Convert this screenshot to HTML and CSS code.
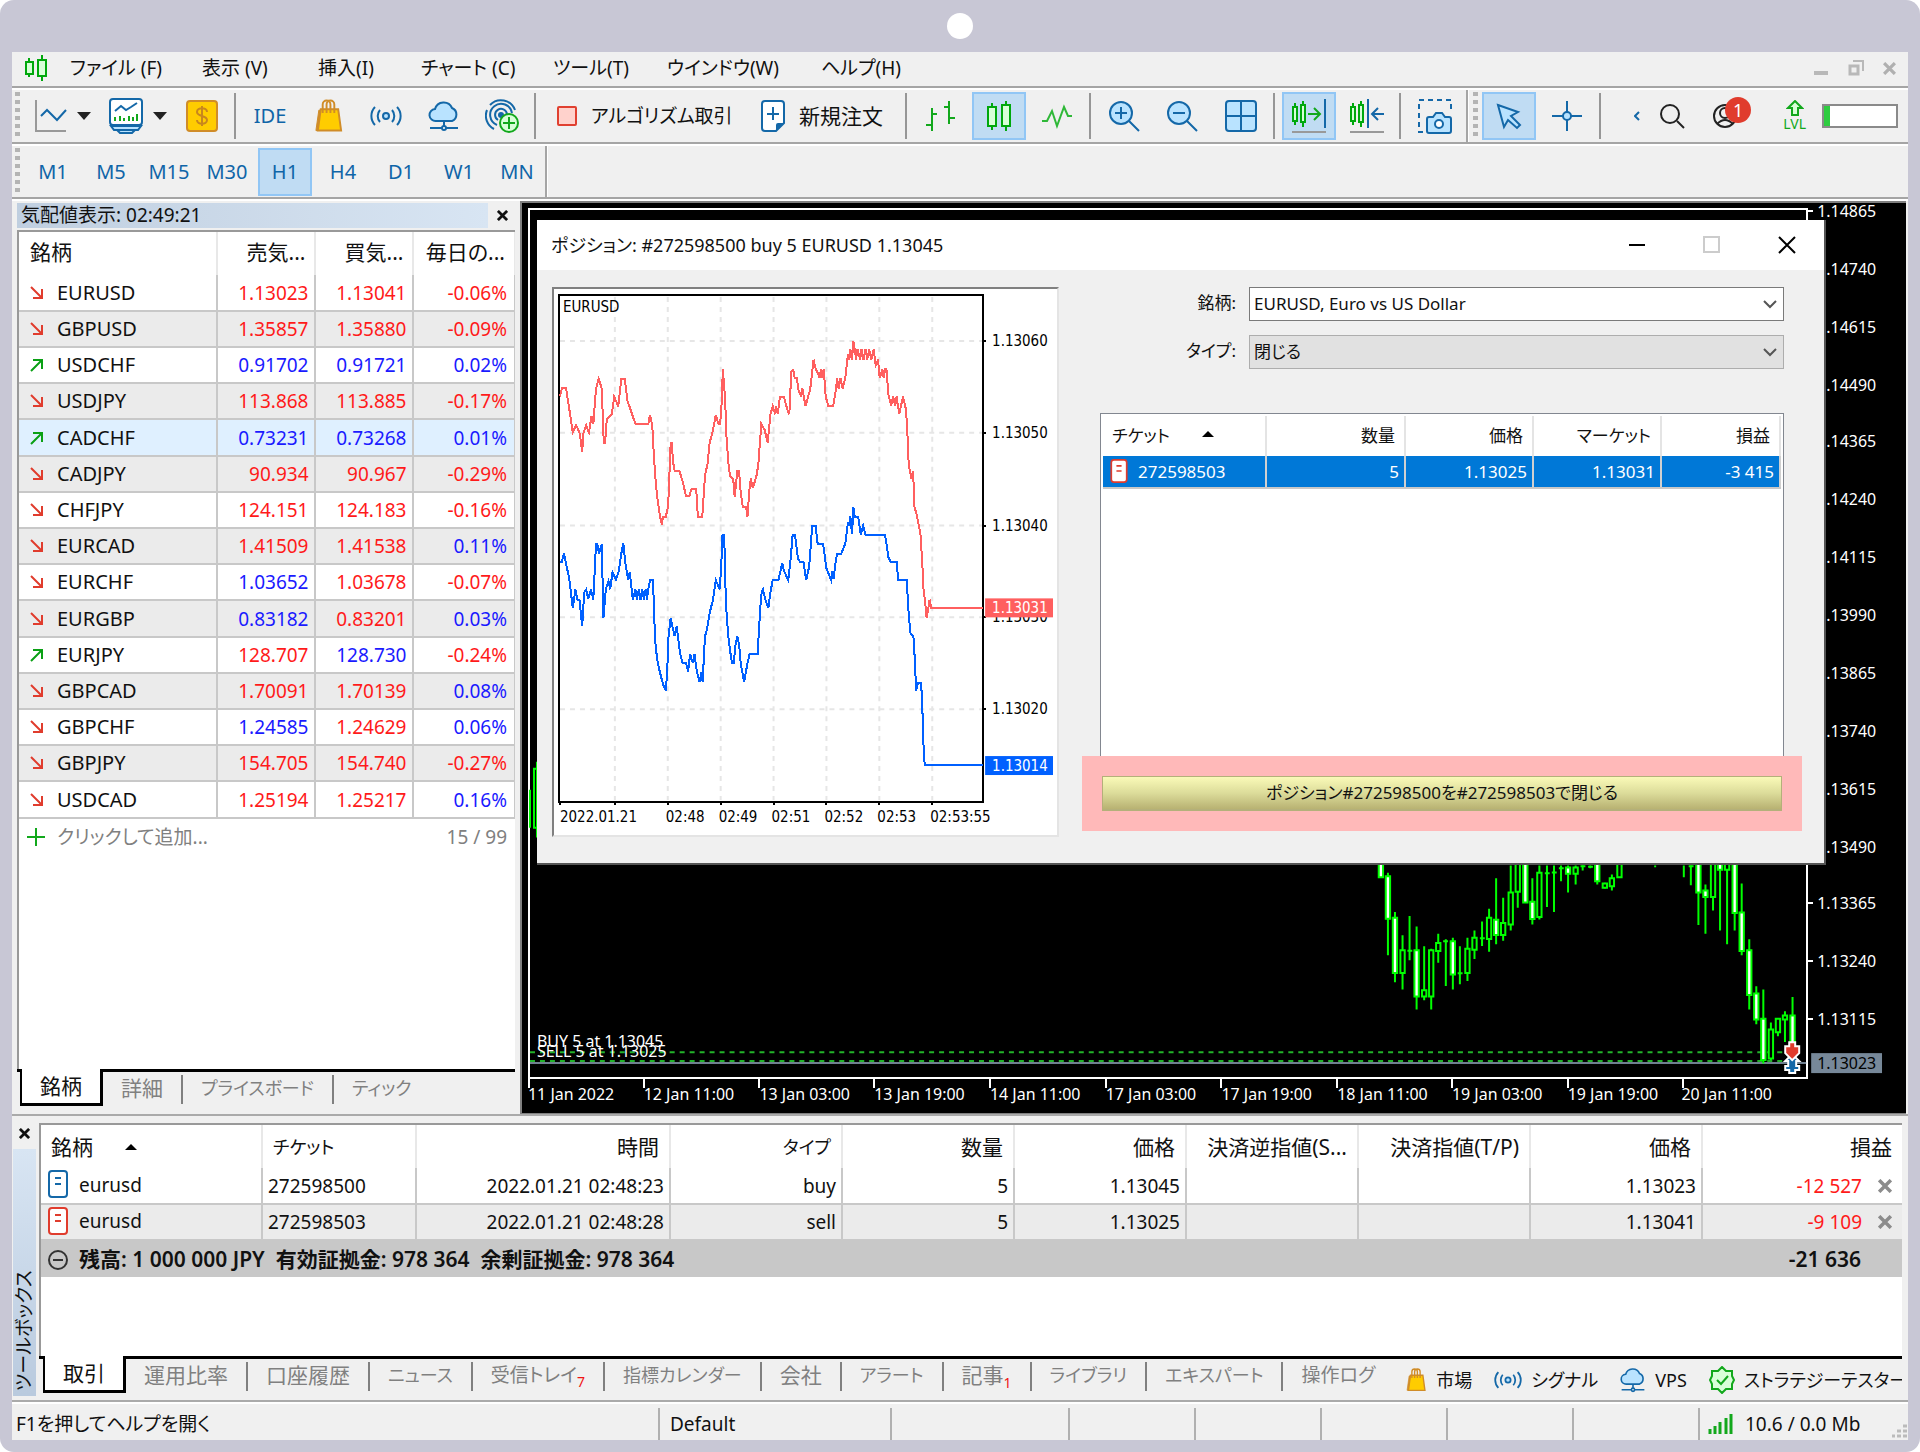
FILE: index.html
```
<!DOCTYPE html>
<html lang="ja">
<head>
<meta charset="utf-8">
<title>EURUSD,H1</title>
<link rel="stylesheet" href="styles.css">
</head>
<body>
<svg class="defs" aria-hidden="true">
  <symbol id="i-bag" viewBox="0 0 32 34">
    <path d="M10 10V5a4 4 0 0 1 8 0v5M14 10V5a4 4 0 0 1 8 0v5" fill="none" stroke="#d08c28" stroke-width="2"/>
    <path d="M6 11h4l-3 21H3z" fill="#d08c28" stroke="#d08c28"/>
    <path d="M8 10h18l3 22H5z" fill="#fc0" stroke="#d08c28" stroke-width="2"/>
    <path d="M10 10v4M14 10v4M18 10v4M22 10v4" stroke="#d08c28" stroke-width="2"/>
  </symbol>
  <symbol id="i-signal" viewBox="0 0 32 32">
    <g fill="none" stroke="#1468a8" stroke-width="2"><circle cx="16" cy="16" r="3" fill="#b9e3ff"/><path d="M10 10a9 9 0 0 0 0 12M22 10a9 9 0 0 1 0 12M5 7a13 13 0 0 0 0 18M27 7a13 13 0 0 1 0 18"/></g>
  </symbol>
  <symbol id="i-cloud" viewBox="0 0 32 32">
    <path d="M8 21a6 6 0 0 1-1-12 9 9 0 0 1 17-1 7 7 0 0 1 0 13z" fill="#b9e3ff" stroke="#1468a8" stroke-width="2"/>
    <path d="M16 21v6M2 28h12M18 28h12" fill="none" stroke="#1468a8" stroke-width="2"/><circle cx="16" cy="28" r="2" fill="#fff" stroke="#1468a8" stroke-width="2"/>
  </symbol>
  <symbol id="i-doc" viewBox="0 0 20 28">
    <rect x="1" y="1" width="18" height="26" rx="3" fill="#fff" stroke="currentColor" stroke-width="2"/>
    <path d="M7 8h6M7 14h6" stroke="currentColor" stroke-width="2"/>
  </symbol>
  <symbol id="i-down" viewBox="0 0 14 14"><path d="M1 1l11 11M12 3v9H3" fill="none" stroke="#e03c2d" stroke-width="2"/></symbol>
  <symbol id="i-up" viewBox="0 0 14 14"><path d="M1 13L12 2M3 2h9v9" fill="none" stroke="#0aa014" stroke-width="2"/></symbol>
  <symbol id="i-arrow" viewBox="0 0 14 8"><path d="M0 0h14L7 8z" fill="#222"/></symbol>
  <symbol id="i-x" viewBox="0 0 12 12"><path d="M1 1l10 10M11 1L1 11" stroke="currentColor" stroke-width="3"/></symbol>
  <symbol id="i-sort" viewBox="0 0 12 6"><path d="M0 6L6 0l6 6z" fill="#000"/></symbol>
</svg>

<div class="frame">
  <div class="bezel"><span class="camera"></span></div>
  <div class="app">

    <header class="menubar">
      <svg class="logo" viewBox="0 0 24 26"><g fill="#d8ffd8" stroke="#00a80c" stroke-width="2"><path d="M5 3v19M18 0v26"/><rect x="2" y="7" width="7" height="12"/><rect x="14" y="5" width="8" height="16"/></g></svg>
      <nav class="menus">
        <a href="#">ファイル (F)</a><a href="#">表示 (V)</a><a href="#">挿入(I)</a><a href="#">チャート (C)</a><a href="#">ツール(T)</a><a href="#">ウインドウ(W)</a><a href="#">ヘルプ(H)</a>
      </nav>
      <div class="mdi">
        <button aria-label="最小化"><svg width="16" height="16"><rect x="1" y="11" width="14" height="4" fill="#b8b8b8"/></svg></button>
        <button aria-label="元に戻す"><svg width="16" height="16"><path d="M5 1h10v10" fill="none" stroke="#b8b8b8" stroke-width="2"/><rect x="2" y="6" width="8" height="8" fill="none" stroke="#b8b8b8" stroke-width="3"/></svg></button>
        <button aria-label="閉じる" class="dim"><svg width="13" height="13"><use href="#i-x"/></svg></button>
      </div>
    </header>

    <div class="toolbar">
      <span class="grip"></span>
      <button class="split" aria-label="チャート"><svg width="32" height="32"><path d="M1 0v31h30" fill="none" stroke="#999" stroke-width="2"/><path d="M6 16l6-6 10 10 9-10" fill="none" stroke="#1468a8" stroke-width="2"/></svg><svg width="14" height="8"><use href="#i-arrow"/></svg></button>
      <button class="split" aria-label="プロファイル"><svg width="34" height="36"><rect x="1" y="1" width="32" height="26" rx="3" fill="#fff" stroke="#1468a8" stroke-width="2"/><path d="M2 28h30l-3 4H5zM8 32h18l-3 3H11z" fill="#b9e3ff" stroke="#1468a8" stroke-width="2"/><path d="M6 13l6-5 5 4 5-3 6-4" fill="none" stroke="#1468a8" stroke-width="2"/><path d="M6 19v4M11 18v5M15 20v3M20 18v5M24 19v4M28 16v7" stroke="#12a81c" stroke-width="2"/></svg><svg width="14" height="8"><use href="#i-arrow"/></svg></button>
      <button class="tool" aria-label="入出金"><svg width="32" height="32"><rect x="1" y="1" width="30" height="30" rx="3" fill="#fc0" stroke="#d08c28" stroke-width="2"/><path d="M21 12c0-5-10-5-10 0 0 5 10 3 10 8 0 5-10 5-10 0M16 6v20" fill="none" stroke="#c8861e" stroke-width="2"/></svg></button>
      <span class="sep"></span>
      <button class="tool ide">IDE</button>
      <button class="tool" aria-label="市場"><svg width="31" height="34"><use href="#i-bag"/></svg></button>
      <button class="tool" aria-label="シグナル"><svg width="32" height="32"><use href="#i-signal"/></svg></button>
      <button class="tool" aria-label="VPS"><svg width="32" height="32"><use href="#i-cloud"/></svg></button>
      <button class="tool" aria-label="コピー"><svg width="34" height="34" viewBox="0 0 34 34"><g fill="none" stroke="#1468a8" stroke-width="2"><path d="M9 30A15 15 0 0 1 2 11M5 6A15 15 0 0 1 30 11"/><path d="M12 26A11 11 0 1 1 27 14"/><path d="M13 21A6 6 0 1 1 22 15"/></g><circle cx="16" cy="16" r="3" fill="#1468a8"/><circle cx="24" cy="24" r="9" fill="#d8ffd8" stroke="#12a81c" stroke-width="2"/><path d="M24 18v12M18 24h12" stroke="#12a81c" stroke-width="2"/></svg></button>
      <span class="sep"></span>
      <button class="labelled algo"><svg width="20" height="20"><rect x="1" y="1" width="18" height="18" rx="1" fill="#ffd2cc" stroke="#e04030" stroke-width="2"/></svg>アルゴリズム取引</button>
      <button class="labelled order"><svg width="24" height="32"><path d="M4 1h16a3 3 0 0 1 3 3v19l-8 8H4a3 3 0 0 1-3-3V4a3 3 0 0 1 3-3z" fill="#fff" stroke="#1468a8" stroke-width="2"/><path d="M15 31v-6q0-2 2-2h6z" fill="#1468a8"/><path d="M12 7v13M6 14h12" stroke="#1468a8" stroke-width="2"/></svg>新規注文</button>
      <span class="sep"></span>
      <button class="tool" aria-label="バーチャート"><svg width="32" height="32"><path d="M7 8v23M7 14h5M1 25h6M24 1v23M19 7h5M24 18h6" fill="none" stroke="#12a81c" stroke-width="2"/></svg></button>
      <button class="tool on" aria-label="ローソク足"><svg width="32" height="32"><g fill="#d8ffd8" stroke="#00a80c" stroke-width="2"><path d="M9 3v27M23 1v30"/><rect x="5" y="7" width="8" height="19"/><rect x="19" y="5" width="8" height="21"/></g></svg></button>
      <button class="tool" aria-label="ラインチャート"><svg width="32" height="32"><path d="M1 21h5l5-10 5 15 7-19 4 9h4" fill="none" stroke="#2fb838" stroke-width="2"/></svg></button>
      <span class="sep"></span>
      <button class="tool" aria-label="ズームイン"><svg width="32" height="32"><circle cx="12" cy="13" r="11" fill="#b9e3ff" stroke="#1468a8" stroke-width="2"/><path d="M12 7v12M6 13h12M20 21l10 10" stroke="#1468a8" stroke-width="2"/></svg></button>
      <button class="tool" aria-label="ズームアウト"><svg width="32" height="32"><circle cx="12" cy="13" r="11" fill="#b9e3ff" stroke="#1468a8" stroke-width="2"/><path d="M6 13h12M20 21l10 10" stroke="#1468a8" stroke-width="2"/></svg></button>
      <button class="tool" aria-label="整列"><svg width="32" height="32"><rect x="1" y="1" width="30" height="30" rx="3" fill="#b9e3ff" stroke="#1468a8" stroke-width="2"/><path d="M16 1v30M1 16h30" stroke="#1468a8" stroke-width="2"/></svg></button>
      <span class="sep"></span>
      <button class="tool on" aria-label="自動スクロール"><svg width="36" height="36"><g fill="#d8ffd8" stroke="#00a80c" stroke-width="2"><path d="M4 5v22M12 3v26"/><rect x="2" y="9" width="4" height="14"/><rect x="10" y="7" width="4" height="17"/></g><path d="M17 16h12M23 10l6 6-6 6" fill="none" stroke="#12a81c" stroke-width="2"/><path d="M34 1v29" stroke="#1468a8" stroke-width="2"/><path d="M1 34h34" stroke="#999" stroke-width="2"/></svg></button>
      <button class="tool" aria-label="チャートシフト"><svg width="36" height="36"><g fill="#d8ffd8" stroke="#00a80c" stroke-width="2"><path d="M4 5v22M12 3v26"/><rect x="2" y="9" width="4" height="14"/><rect x="10" y="7" width="4" height="17"/></g><path d="M35 16H24M29 10l-6 6 6 6" fill="none" stroke="#1468a8" stroke-width="2"/><path d="M19 1v29" stroke="#1468a8" stroke-width="2"/><path d="M1 34h34" stroke="#999" stroke-width="2"/></svg></button>
      <span class="sep"></span>
      <button class="tool" aria-label="スクリーンショット"><svg width="36" height="36"><path d="M6 34H2V2h32v12" fill="none" stroke="#1468a8" stroke-width="2" stroke-dasharray="5 4"/><path d="M12 19h4l3-4h6l3 4h4q2 0 2 2v12q0 2-2 2H12q-2 0-2-2V21q0-2 2-2z" fill="#b9e3ff" stroke="#1468a8" stroke-width="2"/><circle cx="22" cy="26" r="4" fill="#fff" stroke="#1468a8" stroke-width="2"/></svg></button>
      <span class="edge"></span>
      <span class="grip"></span>
      <button class="tool on" aria-label="カーソル"><svg width="28" height="28"><path d="M3 3l20 7-7 4 9 9-3 3-9-8-4 7z" fill="#b9e3ff" stroke="#1468a8" stroke-width="2"/></svg></button>
      <button class="tool" aria-label="十字カーソル"><svg width="32" height="32"><path d="M16 1v11M16 20v11M1 16h11M20 16h11" stroke="#1468a8" stroke-width="2"/><circle cx="16" cy="16" r="4" fill="#b9e3ff" stroke="#1468a8" stroke-width="2"/></svg></button>
      <span class="sep"></span>
      <div class="tray">
        <svg width="6" height="10"><path d="M5 1L1 5l4 4" fill="none" stroke="#1468a8" stroke-width="2"/></svg>
        <button aria-label="検索"><svg width="26" height="26"><circle cx="11" cy="11" r="9" fill="none" stroke="#222" stroke-width="2"/><path d="M18 18l7 7" stroke="#222" stroke-width="2"/></svg></button>
        <button class="account" aria-label="通知 1件"><svg width="26" height="26"><circle cx="12" cy="13" r="11" fill="none" stroke="#222" stroke-width="2"/><circle cx="12" cy="10" r="5" fill="none" stroke="#222" stroke-width="2"/><path d="M4 21q8-8 16 0" fill="none" stroke="#222" stroke-width="2"/></svg><span class="badge">1</span></button>
        <span class="lvl"><svg width="18" height="16"><path d="M9 1l7 7H12v7H6V8H2z" fill="#d8ffd8" stroke="#12a81c" stroke-width="2"/></svg>LVL</span>
        <span class="meter"><span class="fill"></span></span>
      </div>
    </div>

    <div class="toolbar frames">
      <span class="grip"></span>
      <button class="tool">M1</button><button class="tool">M5</button><button class="tool">M15</button><button class="tool">M30</button><button class="tool on">H1</button><button class="tool">H4</button><button class="tool">D1</button><button class="tool">W1</button><button class="tool">MN</button>
      <span class="edge"></span>
    </div>

    <main class="workspace">
      <section class="market">
        <div class="caption"><h2>気配値表示: 02:49:21</h2><button aria-label="閉じる"><svg width="11" height="11"><use href="#i-x"/></svg></button></div>
        <div class="sheet">
          <table class="quotes">
            <colgroup><col><col class="c-price"><col class="c-price"><col class="c-day"></colgroup>
            <thead><tr><th>銘柄</th><th>売気...</th><th>買気...</th><th>毎日の...</th></tr></thead>
            <tbody>
              <tr><td><svg><use href="#i-down"/></svg>EURUSD</td><td class="r">1.13023</td><td class="r">1.13041</td><td class="r">-0.06%</td></tr>
              <tr><td><svg><use href="#i-down"/></svg>GBPUSD</td><td class="r">1.35857</td><td class="r">1.35880</td><td class="r">-0.09%</td></tr>
              <tr><td><svg><use href="#i-up"/></svg>USDCHF</td><td class="b">0.91702</td><td class="b">0.91721</td><td class="b">0.02%</td></tr>
              <tr><td><svg><use href="#i-down"/></svg>USDJPY</td><td class="r">113.868</td><td class="r">113.885</td><td class="r">-0.17%</td></tr>
              <tr class="hot"><td><svg><use href="#i-up"/></svg>CADCHF</td><td class="b">0.73231</td><td class="b">0.73268</td><td class="b">0.01%</td></tr>
              <tr><td><svg><use href="#i-down"/></svg>CADJPY</td><td class="r">90.934</td><td class="r">90.967</td><td class="r">-0.29%</td></tr>
              <tr><td><svg><use href="#i-down"/></svg>CHFJPY</td><td class="r">124.151</td><td class="r">124.183</td><td class="r">-0.16%</td></tr>
              <tr><td><svg><use href="#i-down"/></svg>EURCAD</td><td class="r">1.41509</td><td class="r">1.41538</td><td class="b">0.11%</td></tr>
              <tr><td><svg><use href="#i-down"/></svg>EURCHF</td><td class="b">1.03652</td><td class="r">1.03678</td><td class="r">-0.07%</td></tr>
              <tr><td><svg><use href="#i-down"/></svg>EURGBP</td><td class="b">0.83182</td><td class="r">0.83201</td><td class="b">0.03%</td></tr>
              <tr><td><svg><use href="#i-up"/></svg>EURJPY</td><td class="r">128.707</td><td class="b">128.730</td><td class="r">-0.24%</td></tr>
              <tr><td><svg><use href="#i-down"/></svg>GBPCAD</td><td class="r">1.70091</td><td class="r">1.70139</td><td class="b">0.08%</td></tr>
              <tr><td><svg><use href="#i-down"/></svg>GBPCHF</td><td class="b">1.24585</td><td class="r">1.24629</td><td class="b">0.06%</td></tr>
              <tr><td><svg><use href="#i-down"/></svg>GBPJPY</td><td class="r">154.705</td><td class="r">154.740</td><td class="r">-0.27%</td></tr>
              <tr><td><svg><use href="#i-down"/></svg>USDCAD</td><td class="r">1.25194</td><td class="r">1.25217</td><td class="b">0.16%</td></tr>
            </tbody>
          </table>
          <div class="add"><svg width="18" height="18"><path d="M9 0v18M0 9h18" stroke="#12a81c" stroke-width="2"/></svg><span>クリックして追加...</span><span class="count">15 / 99</span></div>
        </div>
        <div class="tabs small"><button class="tab active">銘柄</button><button class="tab">詳細</button><button class="tab kana">プライスボード</button><button class="tab kana">ティック</button></div>
      </section>

      <section class="chart">
        <svg class="plot" viewBox="0 0 1384 912" preserveAspectRatio="xMinYMin meet">
          <g fill="none" stroke="#fff" stroke-width="2" shape-rendering="crispEdges">
            <path d="M7 877V6h1281v871z"/>
            <path d="M1288 8h6M1288 702h6M1288 760h6M1288 818h6M7 877v10M122 877v10M238 877v10M353 877v10M469 877v10M585 877v10M701 877v10M817 877v10M932 877v10M1048 877v10M1164 877v10"/>
          </g>
          <path d="M8 862h1279" stroke="#708090" stroke-width="2"/>
          <path d="M8 851h1272M8 860h1272" stroke="#22b32a" stroke-width="2" stroke-dasharray="5 5"/>
          <path d="M8 588v38M15 560v76M15 567h-3v59h3" fill="none" stroke="#0f0" stroke-width="2"/>
          <g transform="translate(548 529) scale(.5421 .3333)">
            <path class="wick" d="M577 405V440M590 427V675M603 545V756M617 615V778M630 557V690M643 588V838M657 648V810M670 655V838M683 610V697M697 627V767M710 622V778M723 648V762M737 622V752M750 600V686M764 573V647M777 535V664M790 443V642M803 502V631M817 405V600M830 405V532M844 405V516M857 443V582M870 405V567M884 405V530M897 405V545M910 405V452M923 405V486M937 405V462M950 405V420M964 405V413M977 405V462M991 457V474M1004 432V480M1018 405V440M1084 405V410M1137 405V440M1150 405V464M1164 405V584M1177 462V610M1191 405V540M1204 405V600M1217 405V642M1231 405V600M1244 459V675M1258 627V838M1271 768V882M1284 778V1000M1298 877V990M1311 866V918M1324 843V936M1338 800V950"/>
            <path class="wick" d="M626 661h9M692 633h9M719 729h9M760 624h9M880 428h9M893 426h9M906 413h9M946 407h9M960 409h9M1146 407h9"/>
            <path class="bear" d="M573 395h8v45h-8zM586 437h8v128h-8zM599 562h8v166h-8zM639 660h8v139h-8zM706 633h8v100h-8zM786 568h8v46h-8zM840 395h8v121h-8zM853 514h8v52h-8zM919 411h8v19h-8zM973 395h8v57h-8zM1160 395h8v91h-8zM1173 480h8v20h-8zM1200 395h8v23h-8zM1227 395h8v153h-8zM1240 546h8v116h-8zM1254 660h8v134h-8zM1267 790h8v78h-8zM1280 866h8v124h-8zM1334 856h8v94h-8z"/>
            <path class="bull" d="M613 660h8v68h-8zM653 780h8v19h-8zM666 660h8v139h-8zM679 638h8v24h-8zM733 655h8v73h-8zM746 622h8v36h-8zM773 562h8v64h-8zM799 578h8v36h-8zM813 486h8v96h-8zM826 395h8v89h-8zM866 427h8v133h-8zM933 411h8v19h-8zM987 459h8v13h-8zM1000 443h8v24h-8zM1014 395h8v45h-8zM1187 395h8v105h-8zM1213 395h8v23h-8zM1294 898h8v87h-8zM1307 866h8v40h-8zM1320 856h8v12h-8z"/>
          </g>
          <path d="M1273 853l7 7h-3v5h3v4h-4v3h-6v-3h-4v-4h3v-5h-3z" fill="#1468a8" stroke="#fff" stroke-width="2"/>
          <path d="M1270 845v-4h6v4h4v7l-7 7-7-7v-7z" fill="#e03c2d" stroke="#fff" stroke-width="2"/>
          <rect x="1292" y="852" width="71" height="20" fill="#778899"/>
          <g class="axis">
            <text x="1298" y="14">1.14865</text><text x="1298" y="72">1.14740</text><text x="1298" y="130">1.14615</text><text x="1298" y="188">1.14490</text><text x="1298" y="245">1.14365</text><text x="1298" y="303">1.14240</text><text x="1298" y="361">1.14115</text><text x="1298" y="419">1.13990</text><text x="1298" y="477">1.13865</text><text x="1298" y="535">1.13740</text><text x="1298" y="593">1.13615</text><text x="1298" y="651">1.13490</text><text x="1298" y="708">1.13365</text><text x="1298" y="766">1.13240</text><text x="1298" y="824">1.13115</text><text class="now" x="1298" y="868">1.13023</text>
            <text x="6" y="899">11 Jan 2022</text><text x="122" y="899">12 Jan 11:00</text><text x="238" y="899">13 Jan 03:00</text><text x="353" y="899">13 Jan 19:00</text><text x="469" y="899">14 Jan 11:00</text><text x="585" y="899">17 Jan 03:00</text><text x="701" y="899">17 Jan 19:00</text><text x="817" y="899">18 Jan 11:00</text><text x="932" y="899">19 Jan 03:00</text><text x="1048" y="899">19 Jan 19:00</text><text x="1162" y="899">20 Jan 11:00</text>
            <text x="15" y="846">BUY 5 at 1.13045</text><text x="15" y="856">SELL 5 at 1.13025</text>
          </g>
        </svg>

        <div class="dialog" role="dialog" aria-labelledby="dlg-title">
          <div class="titlebar">
            <h1 id="dlg-title">ポジション: #272598500 buy 5 EURUSD 1.13045</h1>
            <button aria-label="最小化"><svg width="18" height="18"><path d="M1 9h16" stroke="#000" stroke-width="2"/></svg></button>
            <button aria-label="最大化" disabled><svg width="18" height="18"><rect x="1" y="1" width="15" height="15" fill="none" stroke="#ccc" stroke-width="2"/></svg></button>
            <button aria-label="閉じる"><svg width="18" height="18"><path d="M1 1l16 16M17 1L1 17" stroke="#000" stroke-width="2"/></svg></button>
          </div>
          <div class="content">
            <div class="ticks">
              <svg viewBox="0 0 504 547">
                <path d="M61 8v504M114 8v504M167 8v504M220 8v504M273 8v504M326 8v504M379 8v504M6 52h423M6 144h423M6 237h423M6 329h423M6 421h423" stroke="#e6e6e6" stroke-width="2" stroke-dasharray="5 5" fill="none"/>
                <path d="M5 6h425v508H5zM430 52h3M430 144h3M430 237h3M430 329h3M430 421h3M6 514v3M61 514v3M114 514v3M167 514v3M220 514v3M273 514v3M326 514v3M379 514v3" fill="none" stroke="#000" stroke-width="2" shape-rendering="crispEdges"/>
                <g transform="translate(-13 -18) scale(.338 .37)" fill="none" shape-rendering="crispEdges">
                  <path class="ask" d="M56 340L62 318H74L76 328 84 375 90 412 94 437 104 418 108 425 115 440 122 490 126 437 134 418 142 437 150 392 155 415 163 318 171 292 180 318 186 465H190L195 400 210 388 217 340 229 367 238 292H248L256 350 270 388 280 414H318L323 390 330 420 333 475 338 550 344 610 352 660 358 687 362 665H370L377 635 384 475 387 463 392 520 396 541H410L420 570 430 610H440L446 590H460L465 665H478L486 555 494 520 500 465 510 430 518 390 526 414H531L536 350 539 266 546 350 549 437 555 515 560 555 570 565 574 612 582 541H587L592 600 598 638H608L612 665 618 590 622 562 628 588 640 550 645 515 653 414 663 430 672 465 680 388 687 366 694 388 697 366 702 388 708 340H720L730 375 736 388 742 272 748 268 752 290H758L764 325 770 337 775 318 784 366 798 320 808 240 813 262 820 275 826 290 830 266 834 290 838 266 844 340 852 366H866L872 335 878 290 882 318 888 290 894 318 902 290 910 225 914 240 917 212 922 240 926 190 930 212 934 240 938 212 946 240 950 212 956 240 962 212 967 240 973 212 979 240 986 212 992 255 999 240 1004 290 1012 266 1016 290 1020 266H1024L1030 335 1038 364 1044 340 1050 366 1054 340 1062 388 1073 340 1082 375 1087 455 1090 525 1098 562 1103 541 1107 638 1115 665 1125 714 1130 787 1134 862 1139 900 1143 940 1148 915 1152 890 1157 912H1309"/>
                  <path class="bid" d="M56 787H62L68 765 76 800 84 835 94 912 102 862 108 890H114L122 962 128 870 134 862 140 888 148 862 155 890 163 740H167L172 765 180 740 185 940 192 862 200 840 205 862 212 815 222 835 230 815 238 765 244 738 250 790 258 835 263 815 272 890 280 862 284 890 290 862 295 890 300 862 305 890 310 862 314 890 318 862 323 837H332L338 998 344 1050 352 1085 362 1120 370 1137 374 1085 378 990 384 940 396 988 402 962 412 1035 420 1062H430L436 1085 442 1038 450 1062 455 1038 462 1085 470 1113 476 1085 479 1113 486 990 492 970 500 925 510 890 518 837 524 850 530 862 536 765 538 714H543L548 900 555 988 560 1025 566 1062H571L577 1010 582 990 587 1010 592 1062 602 1113 612 1062 618 1038H642L650 912 654 870 658 862 665 890 674 912 680 870 687 837H704L715 790 720 812 733 837 740 780 746 714H753L762 780 768 787H778L786 837 795 800 804 690H814L820 738H836L846 805 860 837 864 812 867 835 873 790 878 765H890L902 738 910 680 914 690 917 665 922 712 926 640 930 665H940L948 714 955 690 962 714H1020L1030 775 1036 787H1054L1059 837H1084L1090 930 1095 980 1104 990 1108 1050 1112 1137 1118 1115H1127L1131 1200 1135 1315 1138 1338H1309"/>
                </g>
                <g class="scale">
                  <text x="9" y="23">EURUSD</text>
                  <text x="439" y="57">1.13060</text><text x="439" y="149">1.13050</text><text x="439" y="242">1.13040</text><text x="439" y="334">1.13030</text><text x="439" y="426">1.13020</text>
                  <rect x="432" y="310" width="68" height="19" fill="#ff5f5f"/><rect x="432" y="468" width="68" height="19" fill="#0060ff"/>
                  <text class="inv" x="439" y="325">1.13031</text><text class="inv" x="439" y="483">1.13014</text>
                  <text x="6" y="534">2022.01.21</text><text x="112" y="534">02:48</text><text x="165" y="534">02:49</text><text x="218" y="534">02:51</text><text x="271" y="534">02:52</text><text x="324" y="534">02:53</text><text x="377" y="534">02:53:55</text>
                </g>
              </svg>
            </div>
            <form class="ticket">
              <div class="fields">
                <label for="sym">銘柄:</label>
                <div class="combo"><select id="sym"><option>EURUSD, Euro vs US Dollar</option></select><svg width="14" height="9"><path d="M1 1l6 6 6-6" fill="none" stroke="#555" stroke-width="2"/></svg></div>
                <label for="typ">タイプ:</label>
                <div class="combo muted"><select id="typ"><option>閉じる</option></select><svg width="14" height="9"><path d="M1 1l6 6 6-6" fill="none" stroke="#555" stroke-width="2"/></svg></div>
              </div>
              <div class="list">
                <table>
                  <colgroup><col class="k1"><col class="k2"><col class="k3"><col class="k3"><col></colgroup>
                  <thead><tr><th>チケット<svg class="sort" width="12" height="6"><use href="#i-sort"/></svg></th><th>数量</th><th>価格</th><th>マーケット</th><th>損益</th></tr></thead>
                  <tbody><tr><td><svg class="doc sell" width="18" height="24"><use href="#i-doc"/></svg>272598503</td><td>5</td><td>1.13025</td><td>1.13031</td><td>-3 415</td></tr></tbody>
                </table>
              </div>
              <div class="callout"><button type="button" class="close-by">ポジション#272598500を#272598503で閉じる</button></div>
            </form>
          </div>
        </div>
      </section>
    </main>

    <section class="toolbox">
      <div class="rail"><button aria-label="閉じる"><svg width="11" height="11"><use href="#i-x"/></svg></button><h2>ツールボックス</h2></div>
      <div class="book">
        <div class="sheet">
          <table class="trades">
            <colgroup><col class="t1"><col class="t2"><col class="t3"><col class="t4"><col class="t4"><col class="t4"><col class="t4"><col class="t4"><col class="t4"><col></colgroup>
            <thead><tr><th>銘柄<svg class="sort" width="12" height="6"><use href="#i-sort"/></svg></th><th class="kana">チケット</th><th>時間</th><th class="kana">タイプ</th><th>数量</th><th>価格</th><th>決済逆指値(S...</th><th>決済指値(T/P)</th><th>価格</th><th>損益</th></tr></thead>
            <tbody>
              <tr><td><svg class="doc buy" width="20" height="28"><use href="#i-doc"/></svg>eurusd</td><td>272598500</td><td>2022.01.21 02:48:23</td><td>buy</td><td>5</td><td>1.13045</td><td></td><td></td><td>1.13023</td><td class="r">-12 527<button aria-label="決済"><svg width="14" height="14"><use href="#i-x"/></svg></button></td></tr>
              <tr><td><svg class="doc sell" width="20" height="28"><use href="#i-doc"/></svg>eurusd</td><td>272598503</td><td>2022.01.21 02:48:28</td><td>sell</td><td>5</td><td>1.13025</td><td></td><td></td><td>1.13041</td><td class="r">-9 109<button aria-label="決済"><svg width="14" height="14"><use href="#i-x"/></svg></button></td></tr>
            </tbody>
            <tfoot><tr><td colspan="9"><svg width="20" height="20"><circle cx="10" cy="10" r="9" fill="none" stroke="#333" stroke-width="2"/><path d="M5 10h10" stroke="#333" stroke-width="2"/></svg>残高: 1 000 000 JPY&nbsp; 有効証拠金: 978 364&nbsp; 余剰証拠金: 978 364</td><td>-21 636</td></tr></tfoot>
          </table>
        </div>
        <div class="tabs">
          <button class="tab active">取引</button><button class="tab">運用比率</button><button class="tab">口座履歴</button><button class="tab kana">ニュース</button><button class="tab mixed">受信トレイ<sub>7</sub></button><button class="tab kana">指標カレンダー</button><button class="tab">会社</button><button class="tab kana">アラート</button><button class="tab">記事<sub>1</sub></button><button class="tab kana">ライブラリ</button><button class="tab kana">エキスパート</button><button class="tab mixed">操作ログ</button>
          <div class="services">
            <a href="#"><svg width="22" height="26"><use href="#i-bag"/></svg>市場</a>
            <a href="#"><svg width="28" height="28"><use href="#i-signal"/></svg>シグナル</a>
            <a href="#"><svg width="26" height="26"><use href="#i-cloud"/></svg>VPS</a>
            <a href="#"><svg width="26" height="28" viewBox="0 0 26 28"><path d="M13 1l4 4 6 0 0 5 2 4-2 4 0 5-6 0-4 4-4-4-6 0 0-5-2-4 2-4 0-5 6 0z" fill="#d8ffd8" stroke="#12a81c" stroke-width="2"/><path d="M8 14l4 4 7-8" fill="none" stroke="#12a81c" stroke-width="2"/></svg>ストラテジーテスター</a>
          </div>
        </div>
      </div>
    </section>

    <footer class="status">
      <span class="s1">F1を押してヘルプを開く</span><span class="s2">Default</span><span class="s3"></span><span class="s4"></span><span class="s4"></span><span class="s4"></span><span class="s4"></span><span class="s4"></span>
      <span class="net"><svg width="26" height="20"><path d="M2 20v-5M7 20v-8M12 20V8M18 20V4M23 20V0" stroke="#12a81c" stroke-width="3"/></svg>10.6 / 0.0 Mb</span>
      <svg class="resize" width="16" height="16"><path d="M11 2h4M11 7h4M5 7h4M11 12h4M5 12h4M0 12h3" stroke="#bbb" stroke-width="3"/></svg>
    </footer>
  </div>
</div>
</body>
</html>
```
FILE: styles.css
```
* { box-sizing: border-box; }

body {
  margin: 0;
  background: #fff;
  color: #111;
  font: 19px/24px "Noto Sans", "Noto Sans CJK JP", sans-serif;
  font-feature-settings: "palt";
}

h1, h2 { margin: 0; font-size: inherit; font-weight: 400; }
a { color: inherit; text-decoration: none; }
svg { display: block; flex: none; }
button, select {
  margin: 0;
  padding: 0;
  border: 0;
  background: none;
  color: inherit;
  font: inherit;
  font-feature-settings: inherit;
}
table { border-collapse: collapse; table-layout: fixed; width: 100%; }
th { font-weight: 400; }
.defs { position: absolute; width: 0; height: 0; }

.frame {
  display: flex;
  flex-direction: column;
  min-height: 100vh;
  padding: 0 12px 12px;
  border-radius: 14px;
  background: #c8c7d5;
}
.bezel { display: grid; place-items: center; height: 52px; }
.camera { width: 26px; height: 26px; border-radius: 50%; background: #fff; }
.app { display: flex; flex: 1; flex-direction: column; background: #f0f0f0; }

/* menu */
.menubar {
  display: flex;
  align-items: center;
  height: 36px;
  padding: 0 12px 2px;
  border-bottom: 2px solid #a5a5a5;
}
.logo { width: 24px; height: 26px; margin-right: 22px; }
.menus { display: grid; grid-template-columns: 132px 116px 103px 132px 114px 154px auto; white-space: nowrap; }
.mdi { display: flex; gap: 19px; align-items: center; margin-left: auto; }
.dim { color: #b0b0b0; }

/* toolbars */
.toolbar {
  display: flex;
  gap: 4px;
  align-items: center;
  height: 56px;
  padding: 0 10px 0 3px;
  border-top: 2px solid #fff;
  border-bottom: 2px solid #a5a5a5;
}
.toolbar button { display: flex; flex: none; align-items: center; justify-content: center; }
.grip { flex: none; width: 5px; height: 48px; background: repeating-linear-gradient(#b4b4b4 0 4px, #f0f0f0 4px 8px); }
.toolbar .grip:first-child { margin-right: 3px; }
.tool { width: 54px; height: 48px; color: #0f65a8; font-size: 20px; }
.tool.on { border: 2px solid #91c6f5; background: #c0dcf3; }
.toolbar .split { gap: 10px; justify-content: flex-start; width: 70px; padding-left: 8px; }
.sep { flex: none; width: 2px; height: 46px; margin: 0 3px 0 1px; background: #969696; }
.edge { flex: none; width: 3px; height: 100%; border-left: 2px solid #a5a5a5; border-right: 1px solid #fff; }
.toolbar .labelled { justify-content: flex-start; gap: 14px; padding-left: 14px; white-space: nowrap; }
.algo { width: 200px; font-size: 19px; }
.order { width: 153px; font-size: 21px; }
.tray { display: flex; gap: 24px; align-items: center; margin-left: auto; }
.tray > svg { margin-right: -5px; }
.account { position: relative; margin-left: 4px; }
.badge {
  position: absolute;
  left: 12px;
  bottom: 6px;
  width: 26px;
  height: 26px;
  border-radius: 50%;
  background: #e03c2d;
  color: #fff;
  font-size: 18px;
  line-height: 26px;
}
.lvl { display: grid; justify-items: center; margin-left: 20px; color: #12a81c; font-size: 14px; line-height: 16px; }
.meter { width: 76px; height: 24px; margin-left: -8px; border: 2px solid #8a8a8a; background: #fff; }
.fill { display: block; width: 6px; height: 100%; background: #2ecc40; }
.frames { height: 55px; }
.toolbar.frames .grip { margin-right: 2px; }
.frames .edge { margin-left: -3px; }

/* workspace */
.workspace { display: grid; flex: 1; grid-template-columns: 508px minmax(0, 1fr); border-top: 2px solid #fff; }
.market { display: flex; flex-direction: column; padding: 0 5px 4px; }
.caption { display: flex; align-items: center; height: 29px; padding-right: 7px; }
.caption h2 {
  flex: 1;
  margin-right: 9px;
  padding-left: 4px;
  background: linear-gradient(90deg, #c0cfe0, #d8e5f3);
  font-size: 19px;
  line-height: 25px;
}
.sheet { flex: 1; border-top: 2px solid #999; border-left: 2px solid #999; background: #fff; }
.c-price { width: 98px; }
.c-day { width: 102px; }
.quotes th { height: 43px; border-right: 2px solid #e8e8e8; font-size: 21px; text-align: right; padding: 0 8px 3px; }
.quotes th:first-child { padding-left: 11px; text-align: left; }
.quotes td { height: 36px; padding: 0 5px; border-right: 2px solid #c8c8c8; border-bottom: 2px solid #c8c8c8; text-align: right; }
.quotes tr:nth-child(5n) td { height: 37px; }
.quotes td:first-child { padding-left: 11px; font-size: 20px; text-align: left; }
.quotes td:last-child, .quotes th:last-child { padding-right: 7px; border-right-width: 1px; }
.quotes th:last-child { padding-right: 9px; }
.quotes td svg { display: inline-block; width: 14px; height: 14px; margin-right: 13px; }
.quotes tbody tr:nth-child(even) { background: #ebebeb; }
.quotes tbody tr.hot { background: #dff0ff; }
.r { color: #ff1a1a; }
.b { color: #1a1aff; }
.add { display: flex; align-items: center; height: 36px; padding: 0 8px; color: #808080; font-size: 19px; }
.add span { margin-left: 12px; }
.add .count { margin-left: auto; }

/* bottom tabs */
.tabs { display: flex; height: 44px; border-top: 3px solid #000; padding-left: 4px; white-space: nowrap; }
.tab { position: relative; flex: none; height: 32px; padding: 0 18px; color: #808080; font-size: 21px; }
.tab + .tab { border-right: 2px solid #808080; border-image: linear-gradient(transparent 5px, #808080 5px 30px, transparent 30px) 2; }
.tab + .tab:last-child, .tab:nth-child(12) { border-right-color: transparent; border-image: none; }
.tab.active { height: 37px; margin-top: -3px; border: solid #000; border-width: 0 3px 3px 2px; background: #fff; color: #111; }
.tab sub { color: #f01414; font-size: 14px; line-height: 0; }
.tab.mixed { font-size: 19px; }
.tab.kana, .trades th.kana { font-size: 18px; }
.small { height: 41px; padding-left: 3px; }

/* price chart */
.chart { position: relative; margin-right: 2px; border: solid #808080; border-width: 2px 0 1px 2px; background: #000; }
.plot { position: absolute; inset: 0; width: 100%; height: 100%; }
.axis { fill: #fff; font-size: 16px; }
.now { fill: #000; }
.wick { fill: none; stroke: #0f0; stroke-width: 2; vector-effect: non-scaling-stroke; }
.bear { fill: #fff; stroke: #0f0; stroke-width: 2; vector-effect: non-scaling-stroke; }
.bull { fill: #000; stroke: #0f0; stroke-width: 2; vector-effect: non-scaling-stroke; }

/* order window */
.dialog {
  position: absolute;
  top: 17px;
  right: 80px;
  left: 15px;
  border-right: 2px solid #555;
  border-bottom: 2px solid #555;
  background: #f0f0f0;
  font-size: 17px;
}
.titlebar { display: flex; align-items: center; height: 50px; padding: 0 28px 0 14px; background: #fff; }
.titlebar h1 { flex: 1; font-size: 18px; }
.titlebar button { margin-left: 57px; }
.content { display: flex; align-items: flex-start; justify-content: space-between; padding: 17px 22px 26px 15px; }
.ticks { flex: none; width: 507px; border: solid; border-width: 2px; border-color: #808080 #e4e4e4 #e4e4e4 #808080; background: #fff; }
.ask { stroke: #ff5f5f; stroke-width: 2; vector-effect: non-scaling-stroke; }
.bid { stroke: #0060ff; stroke-width: 2; vector-effect: non-scaling-stroke; }
.scale { font: 15px "DejaVu Sans Condensed", "DejaVu Sans", sans-serif; }
.inv { fill: #fff; }
.ticket { width: 720px; }
.fields { display: grid; grid-template-columns: 136px 1fr; gap: 14px 13px; padding: 0 18px; }
.fields label { line-height: 32px; text-align: right; }
.combo { position: relative; }
.combo select { width: 100%; height: 34px; padding: 0 4px; border: 1px solid #7a7a7a; appearance: none; background: #fff; }
.combo svg { position: absolute; top: 13px; right: 7px; }
.combo.muted select { border-color: #adadad; background: #e1e1e1; }
.list { height: 343px; margin: 44px 18px 0; padding: 2px 2px 0; border: 1px solid #828790; border-bottom: 0; background: #fff; }
.k1 { width: 163px; }
.k2 { width: 139px; }
.k3 { width: 128px; }
.list th { height: 40px; border-right: 2px solid #e4e4e4; text-align: right; padding: 0 9px; }
.list td { height: 32px; border-right: 2px solid #d0d0d0; border-bottom: 2px solid #c8c8c8; background: #0078d7; color: #fff; text-align: right; padding: 0 5px; }
.list th:first-child, .list td:first-child { text-align: left; }
.sort { display: inline-block; margin: 0 0 5px 32px; }
.doc { display: inline-block; vertical-align: middle; }
.list .doc { margin: -4px 10px 0 2px; }
.buy { color: #1468a8; }
.sell { color: #e03c2d; }
.callout { padding: 20px; background: #ffb9b9; }
.close-by {
  display: block;
  width: 100%;
  height: 35px;
  border: 1px solid #b4b07a;
  border-bottom-width: 2px;
  background: linear-gradient(#fafab8, #dcdc9a 50%, #b8b272);
}

/* toolbox */
.toolbox { display: flex; height: 288px; padding-top: 7px; border-top: 2px solid #aaa; border-bottom: 2px solid #aaa; }
.rail { display: flex; flex-direction: column; align-items: center; width: 27px; padding-right: 2px; }
.rail button { margin: 5px 0 10px; }
.rail h2 {
  flex: 1;
  width: 23px;
  min-height: 0;
  margin-bottom: 4px;
  padding-top: 5px;
  background: linear-gradient(#b9cade, #d8e5f3);
  line-height: 23px;
  text-orientation: sideways;
  transform: rotate(180deg);
  white-space: nowrap;
  writing-mode: vertical-rl;
}
.book { display: flex; flex: 1; flex-direction: column; min-width: 0; padding-right: 6px; }
.t1 { width: 221px; }
.t2 { width: 154px; }
.t3 { width: 254px; }
.t4 { width: 172px; }
.trades th { height: 43px; padding: 0 10px; border-right: 2px solid #e8e8e8; font-size: 21px; text-align: right; white-space: nowrap; }
.trades td { height: 36px; padding: 0 5px; border-right: 2px solid #c8c8c8; border-bottom: 2px solid #c8c8c8; text-align: right; }
.trades tr > :nth-child(-n+2) { text-align: left; }
.trades tr > :last-child { border-right: 0; }
.trades td:first-child { padding-left: 7px; }
.trades tbody tr:nth-child(even) { background: #ebebeb; }
.trades .doc { margin: -4px 11px 0 0; }
.trades button { display: inline-block; margin: 0 5px 0 16px; color: #8c8c8c; }
.trades tfoot { background: #c8c8c8; font-size: 21px; font-weight: 600; }
.trades tfoot td { height: 37px; border: 0; text-align: left; }
.trades tfoot td:last-child { padding-right: 41px; text-align: right; }
.trades tfoot svg { display: inline-block; margin-right: 11px; vertical-align: -3px; }
.services { display: flex; flex: 1; gap: 22px; align-items: center; min-width: 0; margin-left: 10px; overflow: hidden; font-size: 18px; }
.services a { display: flex; gap: 9px; align-items: center; }

/* status bar */
.status { display: flex; align-items: flex-end; height: 38px; border-top: 2px solid #fff; white-space: nowrap; }
.status > span { height: 32px; padding-left: 10px; border-left: 2px solid #b0b0b0; line-height: 32px; }
.status .s1 { width: 646px; padding-left: 4px; border-left: 0; font-size: 19px; }
.s2 { width: 232px; }
.s3 { width: 178px; }
.s4 { width: 126px; }
.status .net { display: flex; flex: 1; gap: 11px; align-items: center; padding-left: 8px; }
```
